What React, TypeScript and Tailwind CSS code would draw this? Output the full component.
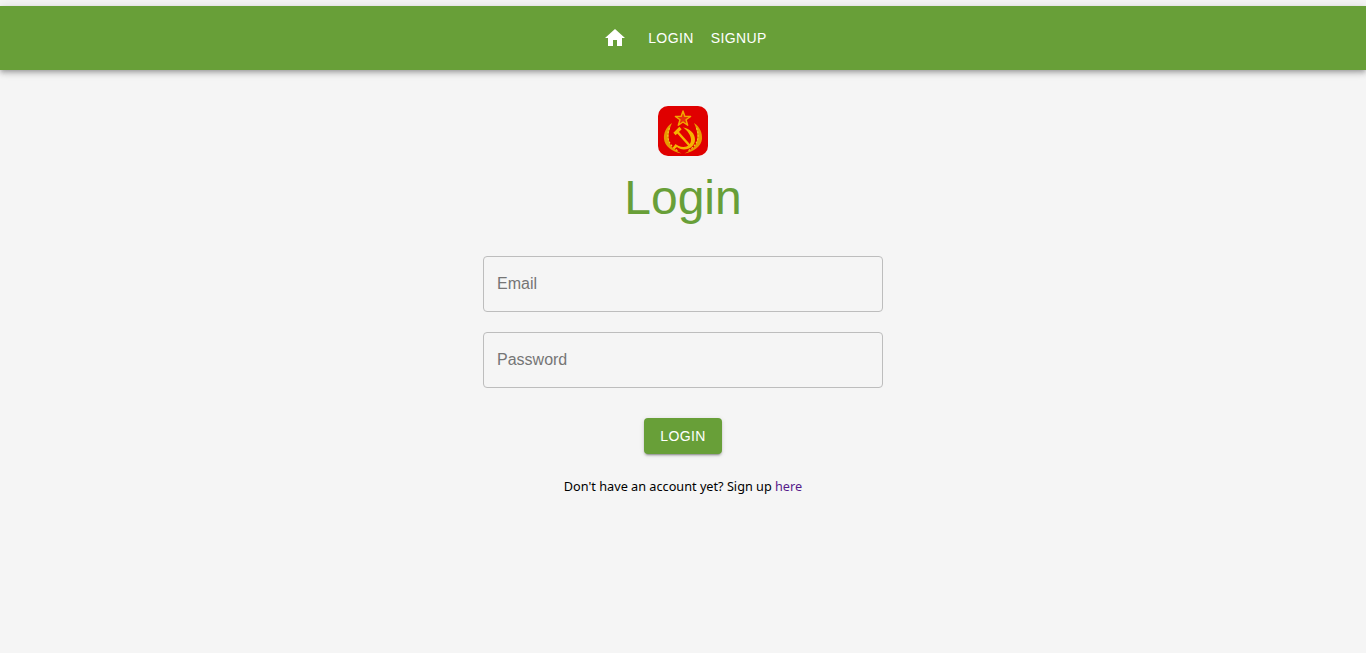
function HomeIcon() {
	return (
		<svg width="24" height="24" viewBox="0 0 24 24" fill="white">
			<path d="M10 20v-6h4v6h5v-8h3L12 3 2 12h3v8z" />
		</svg>
	)
}

function Logo() {
	return (
		<svg width="50" height="50" viewBox="0 0 50 50" className="block">
			<rect width="50" height="50" rx="10" fill="#e00000" />
			{/* star */}
			<path
				d="M25 5l1.900 5.400h5.700l-4.600 3.400 1.700 5.500-4.700-3.300-4.700 3.300 1.700-5.500-4.600-3.400h5.700z"
				fill="#e8320a"
				stroke="#f2a900"
				strokeWidth="1.400"
				strokeLinejoin="round"
			/>
			{/* wreath */}
			<path
				d="M14 17C8 21 5.500 27 6 33c.6 7 8 13 17.500 14.500-5-3-9.500-5-11.500-9.500-2.500-6-1.500-14 2-21z"
				fill="#e89a00"
			/>
			<path
				d="M36 17c6 4 8.500 10 8 16-.6 7-8 13-17.500 14.500 5-3 9.500-5 11.500-9.500 2.500-6 1.500-14-2-21z"
				fill="#e89a00"
			/>
			<path
				d="M11.500 22C8.500 29 8.500 38 20 45"
				fill="none"
				stroke="#f7c325"
				strokeWidth="1.200"
				strokeDasharray="2 1.500"
			/>
			<path
				d="M38.500 22c3 7 3 16-8.500 23"
				fill="none"
				stroke="#f7c325"
				strokeWidth="1.200"
				strokeDasharray="2 1.500"
			/>
			{/* sickle */}
			<path
				d="M25 21.500c7 1 12 6 12 12 0 6-5 10-11 10-2.800 0-5.300-1-7-2.500L16.500 43 15 41.500l2.500-3.500c1.500 1.500 4.500 3 8 3 4.500 0 7.500-3 7.500-7 0-4.500-3-9-8-12.500z"
				fill="#f5b400"
			/>
			{/* hammer */}
			<path d="M19.500 26l12.500 14" stroke="#f5b400" strokeWidth="2.400" fill="none" />
			<path d="M16.500 28l6-6" stroke="#f5b400" strokeWidth="3.200" fill="none" />
		</svg>
	)
}

export default function App() {
	return (
		<div className="min-h-screen bg-[#f5f5f5] pt-1.5 font-['Liberation_Sans',Arial,sans-serif]">
			<nav className="relative flex h-16 items-center justify-center bg-[#689f38] text-white shadow-[0_2px_4px_-1px_rgba(0,0,0,0.2),0_4px_5px_0_rgba(0,0,0,0.14),0_1px_10px_0_rgba(0,0,0,0.12)]">
				<button className="flex h-12 w-12 items-center justify-center">
					<HomeIcon />
				</button>
				<button className="ml-px px-2 py-1.5 text-sm tracking-[0.4px]">LOGIN</button>
				<button className="ml-px px-2 py-1.5 text-sm tracking-[0.4px]">SIGNUP</button>
			</nav>
			<main className="flex flex-col items-center pt-9">
				<Logo />
				<h1 className="mt-3.5 text-5xl leading-[56px] text-[#689f38]">Login</h1>
				<form className="mt-[30px] flex w-[400px] flex-col gap-5">
					<input
						placeholder="Email"
						className="h-14 rounded border border-[#bdbdbd] bg-transparent px-[13px] text-base placeholder:text-[#757575]"
					/>
					<input
						placeholder="Password"
						className="h-14 rounded border border-[#bdbdbd] bg-transparent px-[13px] text-base placeholder:text-[#757575]"
					/>
				</form>
				<button className="mt-[30px] h-9 w-[78px] rounded bg-[#689f38] text-sm tracking-[0.4px] text-white shadow-[0_3px_1px_-2px_rgba(0,0,0,0.2),0_2px_2px_0_rgba(0,0,0,0.14),0_1px_5px_0_rgba(0,0,0,0.12)]">
					LOGIN
				</button>
				<p className="mt-[23px] font-['Noto_Sans',sans-serif] text-[12.7px] text-black">
					Don't have an account yet? Sign up <a className="text-[#551a8b]">here</a>
				</p>
			</main>
		</div>
	)
}
